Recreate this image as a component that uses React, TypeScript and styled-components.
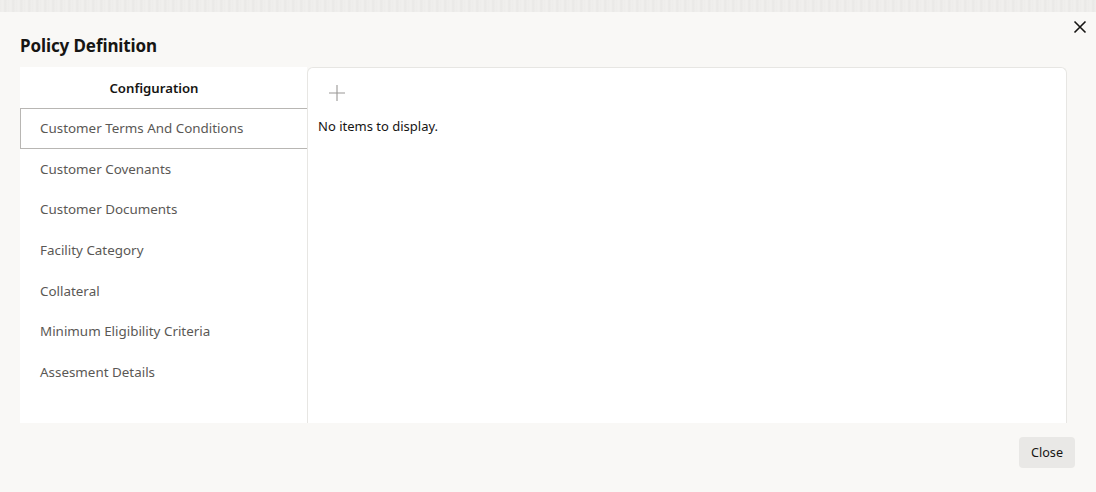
import styled, { createGlobalStyle } from "styled-components";

const GlobalStyle = createGlobalStyle`
  html, body {
    margin: 0;
    padding: 0;
    background: #f9f8f6;
    font-family: "Noto Sans", "Open Sans", sans-serif;
    color: #161513;
  }
`;

const items = [
  "Customer Terms And Conditions",
  "Customer Covenants",
  "Customer Documents",
  "Facility Category",
  "Collateral",
  "Minimum Eligibility Criteria",
  "Assesment Details",
];

const Page = styled.div`
  width: 1096px;
  height: 492px;
  display: flex;
  flex-direction: column;
`;

const Backdrop = styled.div`
  height: 12px;
  background: repeating-linear-gradient(
      90deg,
      #ecebe9 0px,
      #f1f0ee 3px,
      #e8e7e5 5px,
      #efeeec 8px
    ),
    #ecebe9;
  opacity: 0.9;
`;

const Dialog = styled.div`
  flex: 1;
  display: flex;
  flex-direction: column;
  padding: 0 21px 0 20px;
`;

const Header = styled.div`
  height: 55px;
  display: flex;
  align-items: center;
  justify-content: space-between;
  position: relative;
`;

const Title = styled.h1`
  margin: 12px 0 0 0;
  font-size: 17px;
  font-weight: 700;
  letter-spacing: -0.1px;
`;

const CloseIcon = styled.button`
  position: absolute;
  right: -17px;
  top: 3px;
  width: 24px;
  height: 24px;
  padding: 0;
  border: none;
  background: none;
  display: flex;
  align-items: center;
  justify-content: center;
`;

const Body = styled.div`
  display: flex;
  height: 356px;
  margin-right: 8px;
`;

const Nav = styled.div`
  width: 287px;
  background: #fff;
  display: flex;
  flex-direction: column;
`;

const NavHeader = styled.div`
  height: 41px;
  display: flex;
  align-items: center;
  justify-content: center;
  padding-right: 19px;
  font-size: 13.2px;
  font-weight: 600;
  color: #161513;
`;

const NavItem = styled.div<{ $active?: boolean }>`
  box-sizing: border-box;
  height: 40.6px;
  display: flex;
  align-items: center;
  padding-left: 19px;
  font-size: 13.4px;
  color: #5a5855;
  border: 1px solid ${({ $active }) => ($active ? "#b8b6b3" : "transparent")};
  border-right: none;
`;

const Content = styled.div`
  flex: 1;
  background: #fff;
  border: 1px solid #e7e6e3;
  border-bottom: none;
  border-radius: 6px 6px 0 0;
  padding: 16px 10px 0 10px;
`;

const AddButton = styled.button`
  width: 18px;
  height: 18px;
  margin-left: 10px;
  padding: 0;
  border: none;
  background: none;
  display: block;
`;

const Empty = styled.div`
  margin-top: 15px;
  font-size: 13px;
  color: #161513;
`;

const Footer = styled.div`
  display: flex;
  justify-content: flex-end;
  padding-top: 14px;
`;

const Button = styled.button`
  height: 31px;
  padding: 0 12px;
  border: none;
  border-radius: 4px;
  background: #e9e8e6;
  font-family: "Noto Sans", "Open Sans", sans-serif;
  font-size: 12.6px;
  color: #161513;
`;

export default function App() {
  return (
    <Page>
      <GlobalStyle />
      <Backdrop />
      <Dialog>
        <Header>
          <Title>Policy Definition</Title>
          <CloseIcon aria-label="close">
            <svg width="14" height="14" viewBox="0 0 14 14">
              <path d="M1.5 1.5 L12.5 12.5 M12.5 1.5 L1.5 12.5" stroke="#161513" strokeWidth="1.6" fill="none" />
            </svg>
          </CloseIcon>
        </Header>
        <Body>
          <Nav>
            <NavHeader>Configuration</NavHeader>
            {items.map((item, i) => (
              <NavItem key={item} $active={i === 0}>
                {item}
              </NavItem>
            ))}
          </Nav>
          <Content>
            <AddButton aria-label="add">
              <svg width="18" height="18" viewBox="0 0 18 18">
                <path d="M9 1 V17 M1 9 H17" stroke="#9a9896" strokeWidth="1.1" fill="none" />
              </svg>
            </AddButton>
            <Empty>No items to display.</Empty>
          </Content>
        </Body>
        <Footer>
          <Button>Close</Button>
        </Footer>
      </Dialog>
    </Page>
  );
}
